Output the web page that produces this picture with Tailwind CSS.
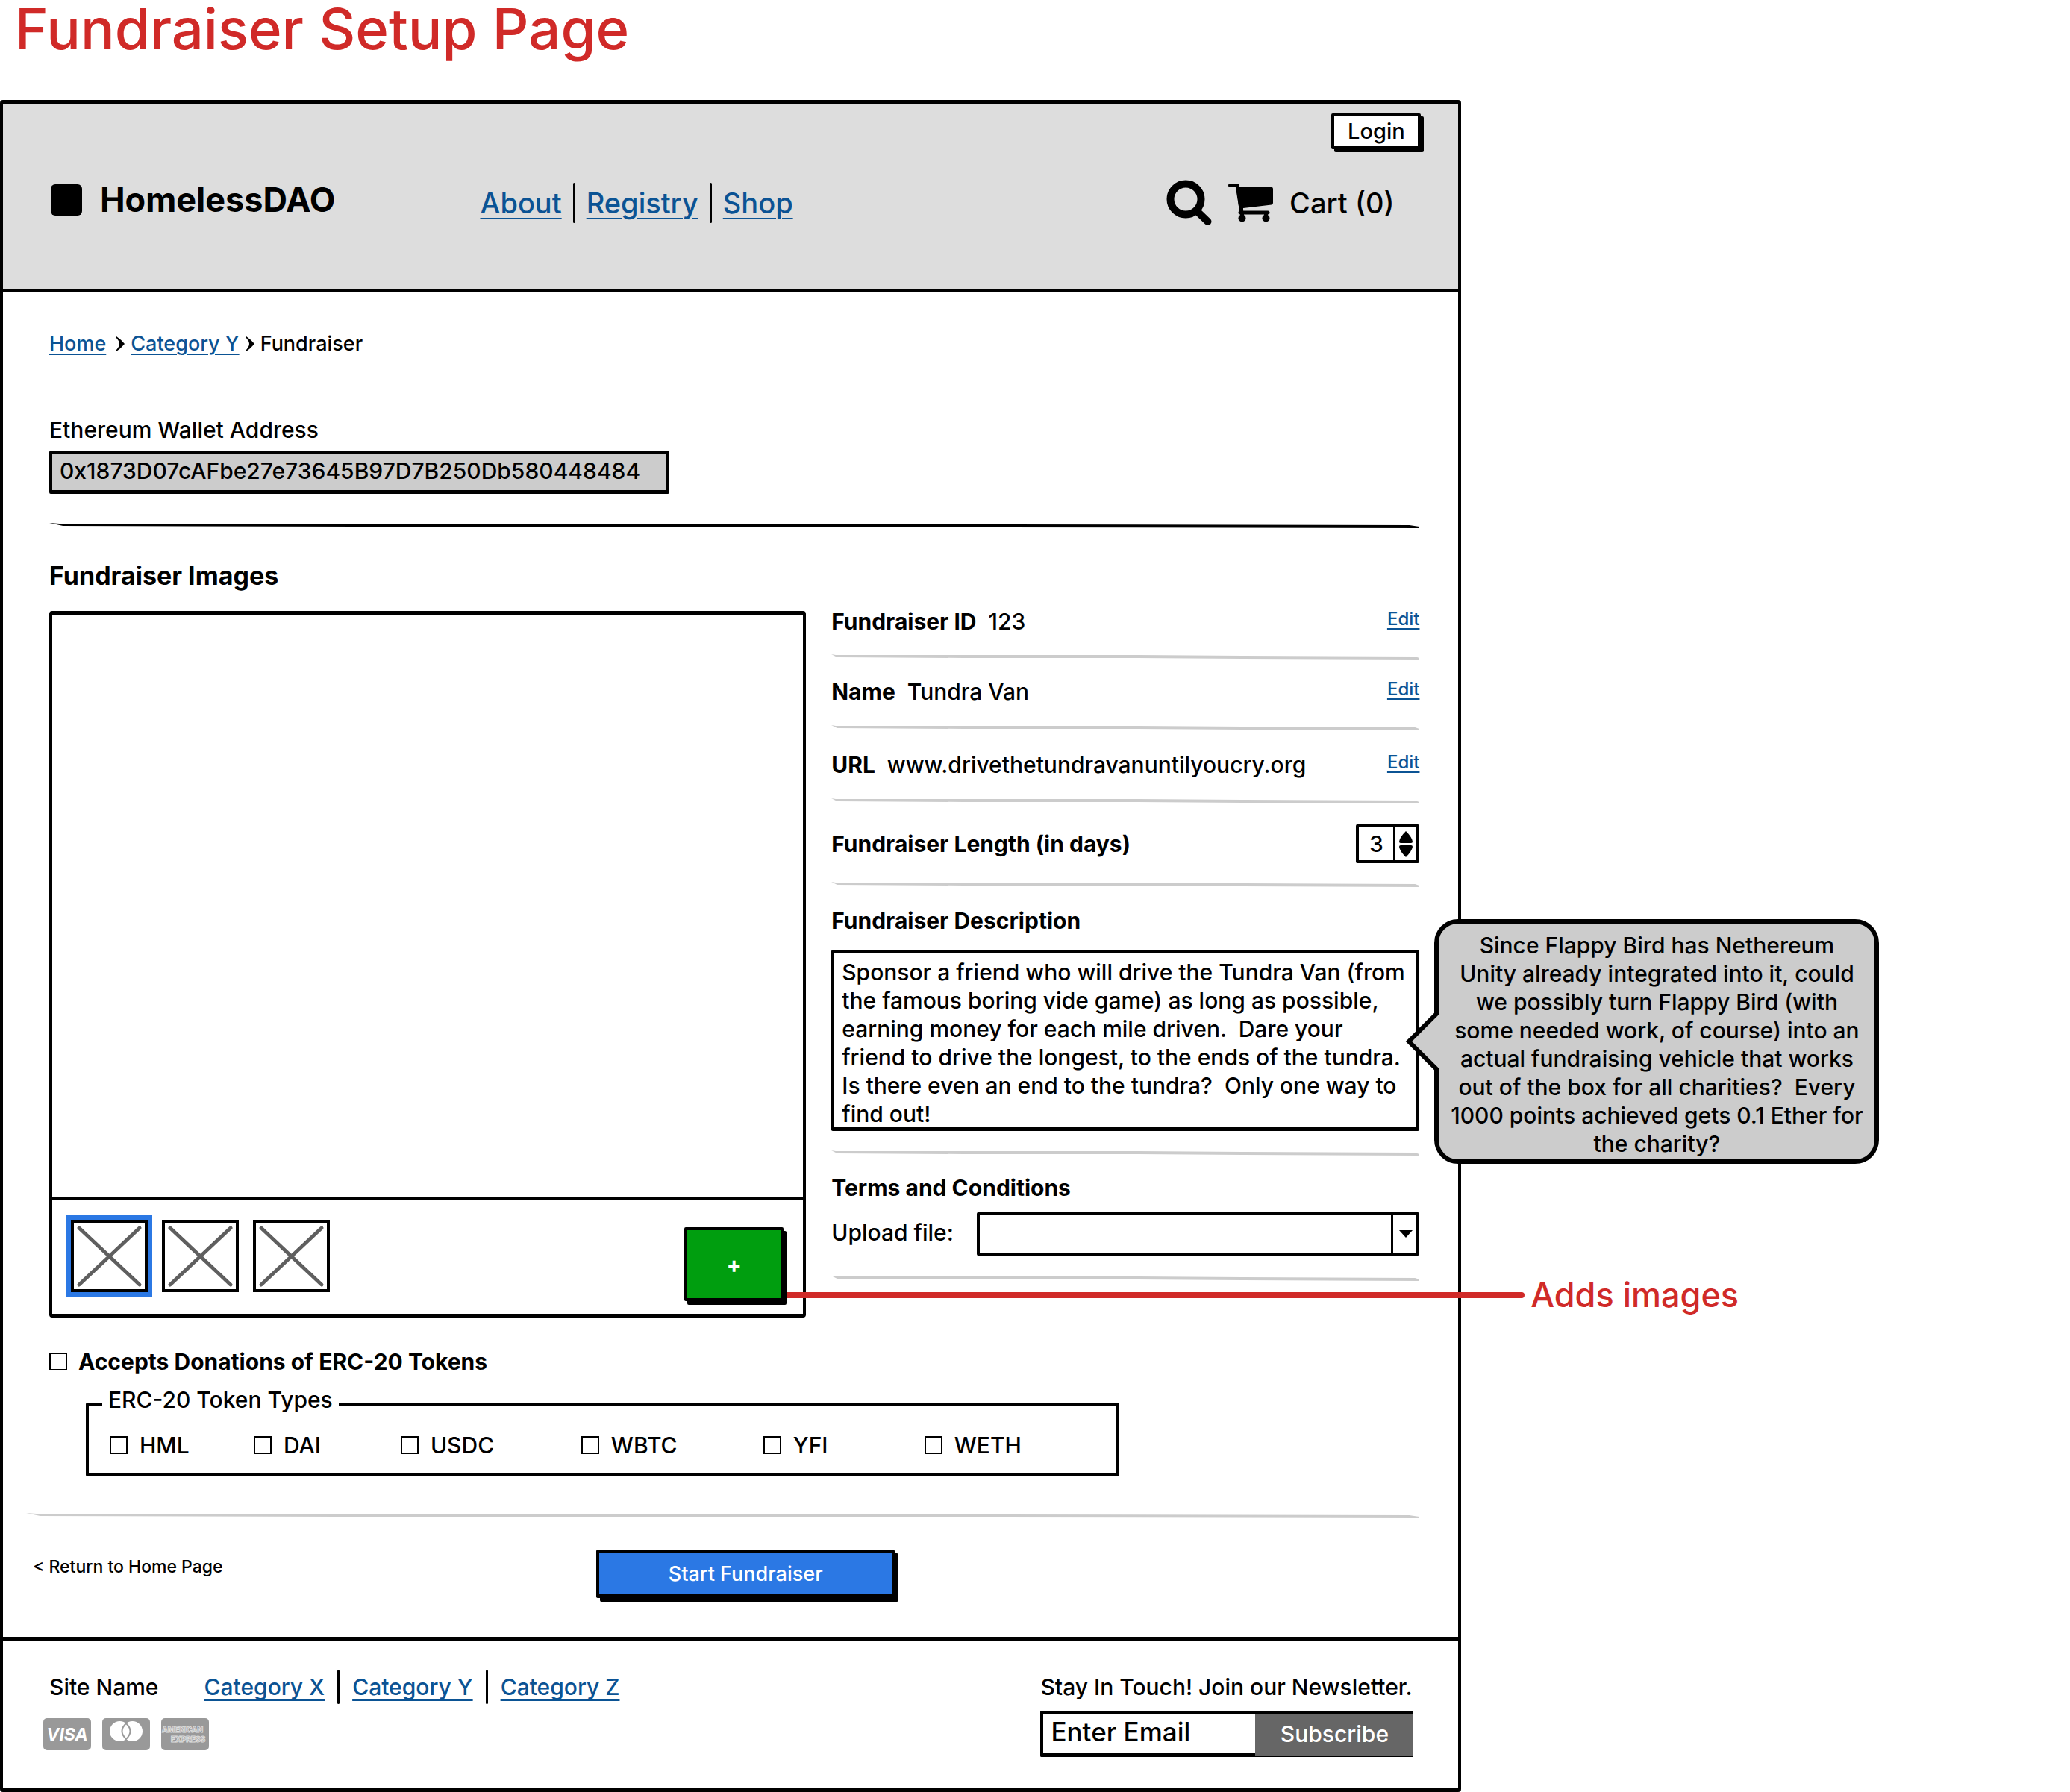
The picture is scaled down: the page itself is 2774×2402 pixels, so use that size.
<!DOCTYPE html>
<html lang="en">
<head>
<meta charset="utf-8">
<meta name="viewport" content="width=device-width, initial-scale=1">
<title>Fundraiser Setup Page</title>
<script src="https://cdn.jsdelivr.net/npm/@tailwindcss/browser@4"></script>
</head>
<body class="overflow-x-hidden bg-white font-['Inter',sans-serif] text-[30px] leading-[30px] font-medium text-black">

<!-- Shared hand-drawn rule -->
<svg class="hidden" aria-hidden="true">
  <symbol id="rule" viewBox="0 0 800 8" preserveAspectRatio="none">
    <path d="M0 1 L6 2 L400 2 L560 3 L794 4 L800 6 L800 8 L560 7 L400 6 L180 6 L8 5 Z"/>
  </symbol>
</svg>

<h1 class="h-[134px] pl-[20px] text-[76px] leading-[76px] text-[#d02a28]">Fundraiser Setup Page</h1>

<div class="w-[70.6%] rounded-sm border-x-4 border-y-[5px] border-black">

  <header class="border-b-[5px] border-black bg-[#ddd] pt-[13px] pr-[50px] pb-[85px] pl-[64px]">
    <div class="flex justify-end">
      <button type="button" class="h-[48px] w-[120px] rounded-xs border-4 border-black bg-white text-[29px] leading-[36px] shadow-[4px_4px_0_0_#000]">Login</button>
    </div>
    <div class="mt-[41px] flex h-[61px] items-center pr-[36px]">
      <a href="#" class="flex items-center gap-6 pb-2">
        <span class="size-[42px] rounded-md bg-black"></span>
        <span class="text-[45px] leading-[48px] font-bold">HomelessDAO</span>
      </a>
      <nav class="ml-[194px] flex items-center gap-[15px] text-[38px] leading-[48px] text-[#0b5394]" aria-label="Main">
        <a href="#" class="underline decoration-2 underline-offset-6">About</a>
        <span class="h-[54px] w-[3px] rounded-full bg-black"></span>
        <a href="#" class="underline decoration-2 underline-offset-6">Registry</a>
        <span class="h-[54px] w-[3px] rounded-full bg-black"></span>
        <a href="#" class="underline decoration-2 underline-offset-6">Shop</a>
      </nav>
      <div class="ml-auto flex items-center gap-[22px]">
        <button type="button" aria-label="Search">
          <svg class="size-[61px]" viewBox="0 0 61 61" fill="none" stroke="#000">
            <circle cx="26" cy="26" r="20.5" stroke-width="10"/>
            <path d="M42 43 L55.500 56" stroke-width="10" stroke-linecap="round"/>
          </svg>
        </button>
        <a href="#" class="flex items-center gap-[22px] text-[38px] leading-[48px]">
          <svg class="h-[61px] w-[60px]" viewBox="0 0 60 61" aria-hidden="true">
            <path d="M2.500 7.500 H12 L18 44" fill="none" stroke="#000" stroke-width="5" stroke-linecap="round" stroke-linejoin="round"/>
            <path d="M11 10 H58 Q60 10 60 12 V31 Q60 33 58 33.500 L20 38 V44 H15 Z"/>
            <path d="M16 44 H53" stroke="#000" stroke-width="5" stroke-linecap="round"/>
            <circle cx="18.500" cy="51.500" r="5"/><circle cx="50.500" cy="51.500" r="5"/>
            <path d="M16 42 h5 v9 h-5z M48 45 h5 v6 h-5z"/>
          </svg>
          <span>Cart (0)</span>
        </a>
      </div>
    </div>
  </header>

  <main class="pb-[52px]">
    <div class="pr-[52px] pl-[62px]">

      <nav class="flex items-center pt-[49px] text-[27px] leading-[40px]" aria-label="Breadcrumb">
        <a href="#" class="text-[#0b5394] underline decoration-2 underline-offset-4">Home</a>
        <svg class="mr-2 ml-[13px] h-5 w-3" viewBox="0 0 12 20" aria-hidden="true"><path d="M1 0 Q7 4 12 10 Q7 16 1 20 L0 19 Q5 14 5 10 Q5 6 0 1 Z"/></svg>
        <a href="#" class="text-[#0b5394] underline decoration-2 underline-offset-4">Category Y</a>
        <svg class="mr-2 ml-2 h-5 w-3" viewBox="0 0 12 20" aria-hidden="true"><path d="M1 0 Q7 4 12 10 Q7 16 1 20 L0 19 Q5 14 5 10 Q5 6 0 1 Z"/></svg>
        <span aria-current="page">Fundraiser</span>
      </nav>

      <label for="wallet" class="mt-[75px] block leading-[40px]">Ethereum Wallet Address</label>
      <input id="wallet" type="text" readonly value="0x1873D07cAFbe27e73645B97D7B250Db580448484" class="mt-2 block h-[58px] w-[831px] rounded-xs border-x-4 border-y-[5px] border-black bg-[#ccc] px-[10px] pb-1">

      <svg class="mt-[38px] h-2 w-full" aria-hidden="true"><use href="#rule"/></svg>

      <h2 class="mt-[44px] text-[34px] leading-[40px] font-bold">Fundraiser Images</h2>

      <div class="mt-[27px] grid grid-cols-[1014fr_788fr] gap-[34px]">

        <!-- Gallery -->
        <section class="rounded-sm border-x-4 border-y-[5px] border-black" aria-label="Gallery">
          <div class="box-content h-[780px] border-b-[5px] border-black"></div>
          <div class="flex h-[152px] items-start gap-[19px] pt-[26px] pr-[26px] pl-[25px]">
            <button type="button" aria-label="Image 1" class="ring-6 ring-[#2b78e4]">
              <svg class="block h-[97px] w-[103px]" viewBox="0 0 103 97"><path d="M2 2 H101 V95 H2 Z" fill="#fff" stroke="#000" stroke-width="4"/><path d="M11 11 L92 87 M92 11 L11 87" stroke="#5f5f5f" stroke-width="5" stroke-linecap="round"/></svg>
            </button>
            <button type="button" aria-label="Image 2">
              <svg class="block h-[97px] w-[103px]" viewBox="0 0 103 97"><path d="M2 2 H101 V95 H2 Z" fill="#fff" stroke="#000" stroke-width="4"/><path d="M11 11 L92 87 M92 11 L11 87" stroke="#5f5f5f" stroke-width="5" stroke-linecap="round"/></svg>
            </button>
            <button type="button" aria-label="Image 3">
              <svg class="block h-[97px] w-[103px]" viewBox="0 0 103 97"><path d="M2 2 H101 V95 H2 Z" fill="#fff" stroke="#000" stroke-width="4"/><path d="M11 11 L92 87 M92 11 L11 87" stroke="#5f5f5f" stroke-width="5" stroke-linecap="round"/></svg>
            </button>
            <div class="relative mt-[10px] ml-auto">
              <button type="button" class="block h-[99px] w-[133px] rounded-xs border-4 border-black bg-[#009e0f] text-[30px] leading-[30px] font-bold text-white shadow-[4px_5px_0_0_#000]">+</button>
              <!-- Annotation pointing at the add button -->
              <div class="absolute top-[67px] left-full z-10 ml-1 flex items-center gap-2 text-[45px] leading-[48px] whitespace-nowrap text-[#d02a28]">
                <span class="h-2 w-[989px] shrink-0 rounded-r-full bg-[#d02a28]"></span>
                <span>Adds images</span>
              </div>
            </div>
          </div>
        </section>

        <!-- Details -->
        <section aria-label="Details">
          <div class="flex items-start justify-between">
            <p class="leading-[28px]"><b>Fundraiser ID</b>&nbsp; 123</p>
            <a href="#" class="text-[24px] leading-[22px] text-[#0b5394] underline decoration-2 underline-offset-4">Edit</a>
          </div>
          <svg class="mt-[29px] h-2 w-full fill-[#ccc]" aria-hidden="true"><use href="#rule"/></svg>

          <div class="mt-[29px] flex items-start justify-between">
            <p class="leading-[28px]"><b>Name</b>&nbsp; Tundra Van</p>
            <a href="#" class="text-[24px] leading-[22px] text-[#0b5394] underline decoration-2 underline-offset-4">Edit</a>
          </div>
          <svg class="mt-[30px] h-2 w-full fill-[#ccc]" aria-hidden="true"><use href="#rule"/></svg>

          <div class="mt-[32px] flex items-start justify-between">
            <p class="leading-[28px]"><b>URL</b>&nbsp; www.drivethetundravanuntilyoucry.org</p>
            <a href="#" class="text-[24px] leading-[22px] text-[#0b5394] underline decoration-2 underline-offset-4">Edit</a>
          </div>
          <svg class="mt-[30px] h-2 w-full fill-[#ccc]" aria-hidden="true"><use href="#rule"/></svg>

          <div class="mt-[28px] flex items-center justify-between">
            <label for="days" class="font-bold">Fundraiser Length (in days)</label>
            <div class="flex h-[52px] w-[85px] rounded-xs border-4 border-black">
              <input id="days" type="text" inputmode="numeric" value="3" class="h-full w-[46px] min-w-0 text-center">
              <div class="flex flex-1 flex-col items-center justify-center gap-[3px] border-l-3 border-black">
                <button type="button" aria-label="More days"><svg class="block h-4 w-[18px]" viewBox="0 0 18 16"><path d="M9 0 Q17 8 18 14 Q18 16 16 16 H2 Q0 16 0 14 Q1 8 9 0 Z"/></svg></button>
                <button type="button" aria-label="Fewer days"><svg class="block h-4 w-[18px]" viewBox="0 0 18 16"><path d="M9 16 Q17 8 18 2 Q18 0 16 0 H2 Q0 0 0 2 Q1 8 9 16 Z"/></svg></button>
              </div>
            </div>
          </div>
          <svg class="mt-[24px] h-2 w-full fill-[#ccc]" aria-hidden="true"><use href="#rule"/></svg>

          <label for="description" class="mt-[30px] block font-bold">Fundraiser Description</label>
          <div class="relative mt-[24px]">
            <textarea id="description" class="block h-[243px] w-full resize-none overflow-hidden rounded-xs border-x-4 border-y-[5px] border-black pt-[6px] pl-[10px] leading-[38px]">Sponsor a friend who will drive the Tundra Van (from
the famous boring vide game) as long as possible,
earning money for each mile driven.  Dare your
friend to drive the longest, to the ends of the tundra.
Is there even an end to the tundra?  Only one way to
find out!</textarea>
            <!-- Comment bubble -->
            <aside class="absolute -top-[41px] left-full z-10 ml-5 h-[328px] w-[596px] rounded-[32px] border-6 border-black bg-[#ccc] pt-[10px] text-center leading-[38px]">
              <svg class="absolute top-[116px] -left-[46px] h-[84px] w-[50px]" viewBox="0 0 50 84" aria-hidden="true">
                <path d="M43 5 L6 42 L43 79 H48 V5 Z" fill="#ccc"/>
                <path d="M43 5 L6 42 L43 79" fill="none" stroke="#000" stroke-width="6" stroke-linecap="square"/>
              </svg>
              <p>Since Flappy Bird has Nethereum<br>Unity already integrated into it, could<br>we possibly turn Flappy Bird (with<br>some needed work, of course) into an<br>actual fundraising vehicle that works<br>out of the box for all charities?&nbsp; Every<br>1000 points achieved gets 0.1 Ether for<br>the charity?</p>
            </aside>
          </div>
          <svg class="mt-[25px] h-2 w-full fill-[#ccc]" aria-hidden="true"><use href="#rule"/></svg>

          <h3 class="mt-[28px] font-bold">Terms and Conditions</h3>
          <div class="mt-[18px] flex items-center justify-between">
            <label for="terms" class="pb-1">Upload file:</label>
            <div class="relative w-[75.3%]">
              <select id="terms" class="block h-[58px] w-full appearance-none rounded-xs border-4 border-black bg-white px-3"><option value=""></option></select>
              <span class="pointer-events-none absolute inset-y-0 right-0 flex w-[38px] items-center border-l-3 border-black pl-2">
                <svg class="h-[10px] w-[18px]" viewBox="0 0 18 10" aria-hidden="true"><path d="M0 0 H18 L9 10 Z"/></svg>
              </span>
            </div>
          </div>
          <svg class="mt-[26px] h-2 w-full fill-[#ccc]" aria-hidden="true"><use href="#rule"/></svg>
        </section>
      </div>

      <label class="mt-[39px] flex items-center gap-[15px] leading-[40px] font-bold">
        <input type="checkbox" class="size-6 appearance-none border-2 border-black checked:bg-black">
        Accepts Donations of ERC-20 Tokens
      </label>

      <fieldset class="mt-[17px] ml-[49px] w-[75.400%] rounded-xs border-x-4 border-y-[5px] border-black px-[28px] pb-[22px]">
        <legend class="-ml-[10px] px-2 pb-[13px] leading-[28px]">ERC-20 Token Types</legend>
        <div class="grid grid-cols-[193fr_197fr_242fr_244fr_216fr_229fr] pt-[19px]">
          <label class="flex items-center gap-4"><input type="checkbox" class="size-6 appearance-none border-2 border-black checked:bg-black">HML</label>
          <label class="flex items-center gap-4"><input type="checkbox" class="size-6 appearance-none border-2 border-black checked:bg-black">DAI</label>
          <label class="flex items-center gap-4"><input type="checkbox" class="size-6 appearance-none border-2 border-black checked:bg-black">USDC</label>
          <label class="flex items-center gap-4"><input type="checkbox" class="size-6 appearance-none border-2 border-black checked:bg-black">WBTC</label>
          <label class="flex items-center gap-4"><input type="checkbox" class="size-6 appearance-none border-2 border-black checked:bg-black">YFI</label>
          <label class="flex items-center gap-4"><input type="checkbox" class="size-6 appearance-none border-2 border-black checked:bg-black">WETH</label>
        </div>
      </fieldset>
    </div>

    <div class="pr-[52px] pl-[31px]">
      <svg class="mt-[48px] h-2 w-full fill-[#ccc]" aria-hidden="true"><use href="#rule"/></svg>
      <div class="mt-[42px] grid grid-cols-[764fr_1103fr] items-start">
        <a href="#" class="mt-2 pl-[9px] text-[23px]">&lt; Return to Home Page</a>
        <button type="button" class="h-[65px] w-[400px] rounded-xs border-x-4 border-y-[5px] border-black bg-[#2b78e4] text-[27px] text-white shadow-[5px_5px_0_0_#000]">Start Fundraiser</button>
      </div>
    </div>
  </main>

  <footer class="flex items-start justify-between border-t-[5px] border-black pt-[39px] pr-[60px] pb-[42px] pl-[54px]">
    <div>
      <div class="flex h-[46px] items-center pl-2">
        <span class="mr-[61px]">Site Name</span>
        <nav class="flex items-center gap-[17px] text-[#0b5394]" aria-label="Footer">
          <a href="#" class="underline decoration-2 underline-offset-6">Category X</a>
          <span class="h-[46px] w-[3px] rounded-full bg-black"></span>
          <a href="#" class="underline decoration-2 underline-offset-6">Category Y</a>
          <span class="h-[46px] w-[3px] rounded-full bg-black"></span>
          <a href="#" class="underline decoration-2 underline-offset-6">Category Z</a>
        </nav>
      </div>
      <div class="mt-[19px] flex gap-[15px]">
        <span class="flex h-[43px] w-16 items-center justify-center rounded-[5px] bg-[#999] text-[23px] leading-[22px] font-bold text-white italic">VISA</span>
        <svg class="h-[43px] w-16" viewBox="0 0 64 43" role="img" aria-label="MasterCard">
          <rect width="64" height="43" rx="5" fill="#999"/>
          <circle cx="23.500" cy="17.500" r="13.500" fill="#fff"/><circle cx="40.500" cy="17.500" r="13.500" fill="#fff"/>
          <path d="M32 7 Q21 17.500 32 28 Q43 17.500 32 7 Z" fill="#fff" stroke="#999" stroke-width="2"/>
        </svg>
        <svg class="h-[43px] w-16" viewBox="0 0 64 43" role="img" aria-label="American Express">
          <rect width="64" height="43" rx="5" fill="#999"/>
          <g fill="none" stroke="#ddd" stroke-width="1" font-family="Inter, sans-serif" font-weight="800" font-size="10">
            <text x="1" y="19">AMERICAN</text>
            <text x="13" y="32">EXPRESS</text>
          </g>
        </svg>
      </div>
    </div>

    <form class="w-[500px]">
      <label for="email" class="block leading-[46px]">Stay In Touch! Join our Newsletter.</label>
      <div class="mt-[9px] flex h-[62px]">
        <input id="email" type="email" placeholder="Enter Email" class="w-[288px] rounded-l-xs border-y-[5px] border-l-4 border-black pb-[6px] pl-[10px] text-[35px] placeholder:text-black placeholder:opacity-100">
        <button type="button" class="flex-1 border-t-4 border-b border-black bg-[#666] pb-1 text-white">Subscribe</button>
      </div>
    </form>
  </footer>
</div>
</body>
</html>
